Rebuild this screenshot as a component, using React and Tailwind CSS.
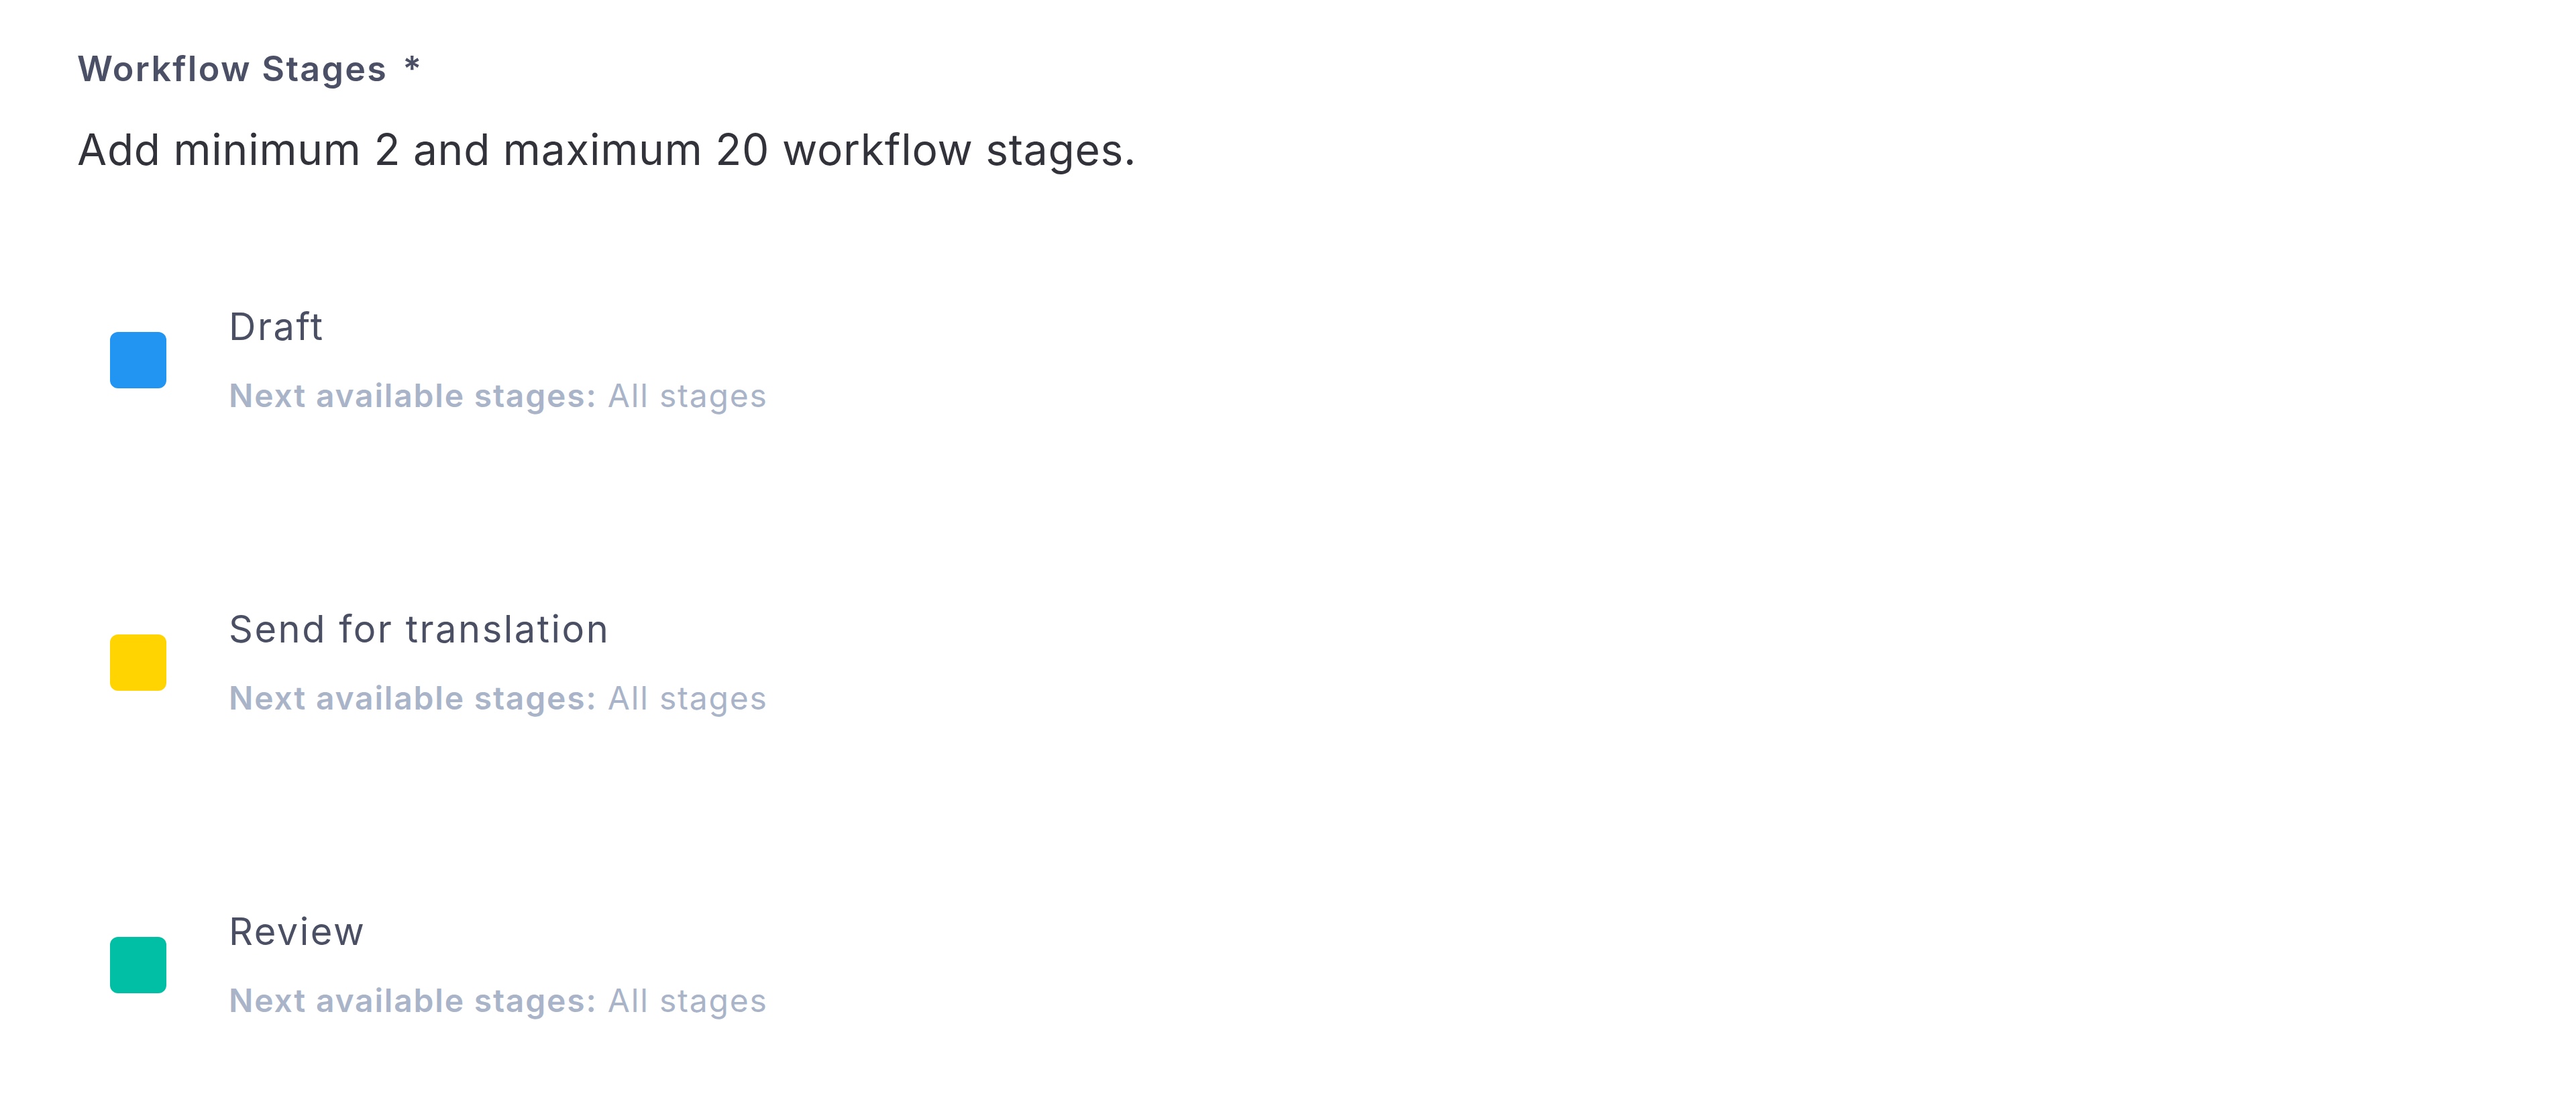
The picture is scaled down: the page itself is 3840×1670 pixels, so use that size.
const stages = [
  { name: "Draft", color: "bg-[#2294f2]" },
  { name: "Send for translation", color: "bg-[#ffd400]" },
  { name: "Review", color: "bg-[#00bfa5]" },
];

function StageRow({ stage }) {
  return (
    <li className="flex items-center">
      <div className={`ml-[49px] h-[84px] w-[84px] shrink-0 rounded-[12px] ${stage.color}`} />
      <div className="ml-[93px] flex flex-col">
        <span className="text-[56px] leading-[72px] tracking-[2.5px] text-[#4a4f64]">{stage.name}</span>
        <span className="mt-[35px] text-[48px] leading-[64px] tracking-[1.8px] text-[#a9b4c8]">
          <span className="font-semibold">Next available stages:</span> All stages
        </span>
      </div>
    </li>
  );
}

export default function App() {
  return (
    <div className="min-h-screen bg-white font-['Inter','Liberation_Sans',sans-serif]">
      <div className="px-[115px] pt-[71px]">
        <h2 className="text-[52px] leading-[64px] font-semibold tracking-[2.3px] text-[#4b5066]">
          Workflow Stages<span className="ml-[22px]">*</span>
        </h2>
        <p className="mt-[44px] text-[64px] leading-[88px] tracking-[0.75px] text-[#32323a]">
          Add minimum 2 and maximum 20 workflow stages.
        </p>

        <ul className="mt-[184px] flex flex-col gap-[280px]">
          {stages.map((s) => (
            <StageRow key={s.name} stage={s} />
          ))}
        </ul>
      </div>
    </div>
  );
}
